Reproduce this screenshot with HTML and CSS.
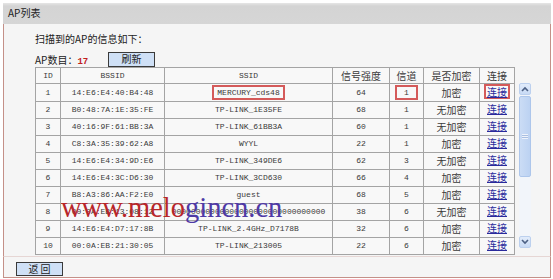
FILE: index.html
```html
<!DOCTYPE html>
<html lang="zh-CN">
<head>
    <meta charset="UTF-8">
    <title>AP列表</title>
    <link rel="stylesheet" href="styles.css">
</head>
<body>
    <div class="panel">
        <div class="panel-title">AP列表</div>
        <div class="panel-body">
            <p class="intro">扫描到的AP的信息如下：</p>
            <div class="count-row">
                <span class="count-label">AP数目：<b class="count">17</b></span>
                <button class="btn">刷新</button>
            </div>
            <div class="list-wrap">
                <table class="ap-table">
                    <tr class="head">
                        <td class="c-id">ID</td>
                        <td class="c-bssid">BSSID</td>
                        <td class="c-ssid">SSID</td>
                        <td class="c-sig">信号强度</td>
                        <td class="c-ch">信道</td>
                        <td class="c-enc">是否加密</td>
                        <td class="c-link">连接</td>
                    </tr>
                    <tr>
                        <td>1</td><td>14:E6:E4:40:B4:48</td>
                        <td><span class="mark mark-ssid">MERCURY_cds48</span></td>
                        <td>64</td><td><span class="mark mark-ch">1</span></td><td>加密</td>
                        <td><span class="mark mark-link"><a href="#">连接</a></span></td>
                    </tr>
                    <tr>
                        <td>2</td><td>B0:48:7A:1E:35:FE</td><td>TP-LINK_1E35FE</td>
                        <td>68</td><td>1</td><td>无加密</td><td><a href="#">连接</a></td>
                    </tr>
                    <tr>
                        <td>3</td><td>40:16:9F:61:BB:3A</td><td>TP-LINK_61BB3A</td>
                        <td>60</td><td>1</td><td>无加密</td><td><a href="#">连接</a></td>
                    </tr>
                    <tr>
                        <td>4</td><td>C8:3A:35:39:62:A8</td><td>WYYL</td>
                        <td>22</td><td>1</td><td>加密</td><td><a href="#">连接</a></td>
                    </tr>
                    <tr>
                        <td>5</td><td>14:E6:E4:34:9D:E6</td><td>TP-LINK_349DE6</td>
                        <td>62</td><td>3</td><td>无加密</td><td><a href="#">连接</a></td>
                    </tr>
                    <tr>
                        <td>6</td><td>14:E6:E4:3C:D6:30</td><td>TP-LINK_3CD630</td>
                        <td>66</td><td>4</td><td>加密</td><td><a href="#">连接</a></td>
                    </tr>
                    <tr>
                        <td>7</td><td>B8:A3:86:AA:F2:E0</td><td>guest</td>
                        <td>68</td><td>5</td><td>加密</td><td><a href="#">连接</a></td>
                    </tr>
                    <tr>
                        <td>8</td><td>00:0A:EB:13:08:12</td><td>00000000000000000000000000000000</td>
                        <td>38</td><td>6</td><td>无加密</td><td><a href="#">连接</a></td>
                    </tr>
                    <tr>
                        <td>9</td><td>14:E6:E4:D7:17:8B</td><td>TP-LINK_2.4GHz_D7178B</td>
                        <td>32</td><td>6</td><td>加密</td><td><a href="#">连接</a></td>
                    </tr>
                    <tr>
                        <td>10</td><td>00:0A:EB:21:30:05</td><td>TP-LINK_213005</td>
                        <td>22</td><td>6</td><td>加密</td><td><a href="#">连接</a></td>
                    </tr>
                </table>
                <div class="scrollbar">
                    <div class="sb-btn">
                        <svg width="8" height="6" viewBox="0 0 8 6"><path d="M1 5 L4 2 L7 5" fill="none" stroke="#4d6185" stroke-width="1.6"/></svg>
                    </div>
                    <div class="sb-track">
                        <div class="sb-thumb"><span class="grip"></span></div>
                    </div>
                    <div class="sb-btn">
                        <svg width="8" height="6" viewBox="0 0 8 6"><path d="M1 1 L4 4 L7 1" fill="none" stroke="#4d6185" stroke-width="1.6"/></svg>
                    </div>
                </div>
                <div class="watermark"><span class="wm-red">www.melo</span><span class="wm-blue">gincn.cn</span></div>
            </div>
        </div>
        <div class="panel-foot">
            <button class="btn">返 回</button>
        </div>
    </div>
</body>
</html>
```

FILE: styles.css
```css
body {
    margin: 0;
    background-color: #fff;
    font-family: "Liberation Mono", "Noto Sans CJK SC", monospace;
    font-size: 8px;
    color: #3a3a3a;
}

.panel {
    margin: 3px 0 0 3px;
    width: 548px;
}

.panel-title {
    height: 21px;
    line-height: 20px;
    padding-left: 5px;
    background: linear-gradient(#e6e6e6, #d4d4d4 3px, #d6d6d6);
    font-family: "Noto Sans CJK SC", sans-serif;
    font-size: 10px;
    color: #222;
}

.panel-body {
    position: relative;
    height: 224px;
    padding: 8px 0 0 31px;
    background-color: #f5f5f5;
    border-left: 1px solid #c49088;
    border-right: 1px solid #c49088;
}

.intro {
    margin: 0;
    height: 14px;
    line-height: 14px;
    font-family: "Noto Sans CJK SC", sans-serif;
    font-size: 10px;
    color: #222;
}

.count-row {
    display: flex;
    align-items: center;
    height: 16px;
    margin-top: 5px;
}

.count-label {
    width: 73px;
    font-family: "Noto Sans CJK SC", sans-serif;
    font-size: 10px;
    color: #222;
}

.count {
    font-family: "Liberation Mono", monospace;
    font-size: 9px;
    color: #c0201c;
}

.btn {
    width: 47px;
    height: 15px;
    padding: 0;
    background-color: #cfe0f6;
    border: 1px solid #3a3a3a;
    border-radius: 0;
    font-family: "Noto Sans CJK SC", sans-serif;
    font-size: 10px;
    line-height: 12px;
    color: #222;
}

.list-wrap {
    position: relative;
    display: flex;
    align-items: flex-start;
}

.ap-table {
    width: 472px;
    border-collapse: collapse;
    table-layout: fixed;
    background-color: #f8f8f8;
}

.ap-table td {
    height: 15.45px;
    padding: 0;
    border: 1px solid #a4a4a4;
    text-align: center;
    white-space: nowrap;
    overflow: visible;
    line-height: 14px;
}

.c-id { width: 24px; }
.c-bssid { width: 103px; }
.c-ssid { width: 167px; }
.c-sig { width: 56px; }
.c-ch { width: 33px; }
.c-enc { width: 55px; }
.c-link { width: 34px; }

.head td {
    font-size: 8px;
}

.ap-table a,
.head .c-sig, .head .c-ch, .head .c-enc, .head .c-link,
.ap-table td:nth-child(6) {
    font-family: "Noto Sans CJK SC", sans-serif;
    font-size: 10px;
}

.ap-table a {
    color: #2a2a9c;
    text-decoration: underline;
}

.mark {
    display: inline-block;
    height: 11px;
    line-height: 11px;
    border: 2px solid #d45a5a;
}

.mark-ssid { padding: 0 3px; }
.mark-ch { padding: 0 7px; }
.mark-link { padding: 0 1px; }

.scrollbar {
    display: flex;
    flex-direction: column;
    width: 12px;
    height: 165px;
    margin: 16px 0 0 4px;
    background-color: #f2f5fa;
}

.sb-btn {
    display: flex;
    align-items: center;
    justify-content: center;
    height: 12px;
    background: linear-gradient(#e2ecfb, #c8daf5);
    border: 1px solid #bcd0ee;
    border-radius: 2px;
    box-sizing: border-box;
}

.sb-track {
    flex: 1;
    padding-top: 1px;
}

.sb-thumb {
    display: flex;
    align-items: center;
    justify-content: center;
    height: 81px;
    background: linear-gradient(90deg, #cbdcf5, #bcd2f2);
    border: 1px solid #adc6eb;
    border-radius: 2px;
    box-sizing: border-box;
}

.grip {
    width: 6px;
    height: 5px;
    background: repeating-linear-gradient(#eef3fb 0 1px, #a9bfe2 1px 2px);
}

.watermark {
    position: absolute;
    left: 26px;
    top: 127px;
    font-family: "Liberation Serif", serif;
    font-size: 28.5px;
    line-height: 28px;
    white-space: nowrap;
}

.wm-red { color: #b8262a; }
.wm-blue { color: #4f3aa6; }

.panel-foot {
    height: 15px;
    padding: 5px 0 0 12px;
    background-color: #f5f5f5;
    border: 1px solid #c49088;
    border-top-color: #e6d6d4;
}

.panel-foot .btn {
    height: 14px;
}
```
